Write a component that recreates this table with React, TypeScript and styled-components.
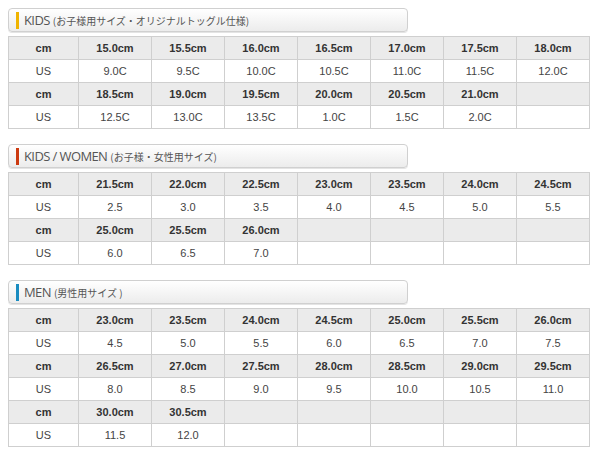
import React from 'react';
import styled, { createGlobalStyle } from 'styled-components';

const GlobalStyle = createGlobalStyle`
  body {
    margin: 8px;
    background: #ffffff;
    font-family: "Liberation Sans", Arial, sans-serif;
  }
`;

type Section = {
  title: string;
  note: string;
  color: string;
  rows: string[][];
};

const sections: Section[] = [
  {
    title: 'KIDS',
    note: '(お子様用サイズ・オリジナルトッグル仕様)',
    color: '#f0b400',
    rows: [
      ['15.0cm', '15.5cm', '16.0cm', '16.5cm', '17.0cm', '17.5cm', '18.0cm'],
      ['9.0C', '9.5C', '10.0C', '10.5C', '11.0C', '11.5C', '12.0C'],
      ['18.5cm', '19.0cm', '19.5cm', '20.0cm', '20.5cm', '21.0cm', ''],
      ['12.5C', '13.0C', '13.5C', '1.0C', '1.5C', '2.0C', ''],
    ],
  },
  {
    title: 'KIDS / WOMEN',
    note: '(お子様・女性用サイズ)',
    color: '#cc3a10',
    rows: [
      ['21.5cm', '22.0cm', '22.5cm', '23.0cm', '23.5cm', '24.0cm', '24.5cm'],
      ['2.5', '3.0', '3.5', '4.0', '4.5', '5.0', '5.5'],
      ['25.0cm', '25.5cm', '26.0cm', '', '', '', ''],
      ['6.0', '6.5', '7.0', '', '', '', ''],
    ],
  },
  {
    title: 'MEN',
    note: ' (男性用サイズ )',
    color: '#1a8cc0',
    rows: [
      ['23.0cm', '23.5cm', '24.0cm', '24.5cm', '25.0cm', '25.5cm', '26.0cm'],
      ['4.5', '5.0', '5.5', '6.0', '6.5', '7.0', '7.5'],
      ['26.5cm', '27.0cm', '27.5cm', '28.0cm', '28.5cm', '29.0cm', '29.5cm'],
      ['8.0', '8.5', '9.0', '9.5', '10.0', '10.5', '11.0'],
      ['30.0cm', '30.5cm', '', '', '', '', ''],
      ['11.5', '12.0', '', '', '', '', ''],
    ],
  },
];

const Block = styled.section`
  margin-bottom: 15px;
`;

const Heading = styled.h2`
  box-sizing: border-box;
  width: 400px;
  height: 24px;
  margin: 0 0 4px;
  padding: 0 0 0 7px;
  display: flex;
  align-items: center;
  border: 1px solid #d0d0d0;
  border-radius: 4px;
  background: linear-gradient(#ffffff, #ececec);
  box-shadow: 0 1px 0 #e4e4e4;
  font-family: "Open Sans", "Noto Sans CJK JP", sans-serif;
  font-weight: 400;
  color: #555555;
`;

const Bar = styled.span<{ $color: string }>`
  width: 3px;
  height: 17px;
  margin-right: 5px;
  background: ${(p) => p.$color};
`;

const Title = styled.span`
  font-size: 13px;
  letter-spacing: -0.6px;
`;

const Note = styled.span`
  font-family: "Noto Sans CJK JP", sans-serif;
  font-size: 10px;
  margin-left: 3px;
  color: #555555;
`;

const Table = styled.table`
  width: 581px;
  table-layout: fixed;
  border-collapse: collapse;
  font-family: "Liberation Sans", Arial, sans-serif;
  font-size: 11px;
`;

const Row = styled.tr<{ $head: boolean }>`
  height: 23px;
  background: ${(p) => (p.$head ? '#ebebeb' : '#ffffff')};
  font-weight: ${(p) => (p.$head ? 700 : 400)};
  color: ${(p) => (p.$head ? '#333333' : '#444444')};
`;

const Cell = styled.td`
  box-sizing: border-box;
  padding: 0;
  border: 1px solid #cfcfcf;
  text-align: center;
  vertical-align: middle;
`;

const SizeTable = ({ section }: { section: Section }) => (
  <Block>
    <Heading>
      <Bar $color={section.color} />
      <Title>{section.title}</Title>
      <Note>{section.note}</Note>
    </Heading>
    <Table>
      <colgroup>
        <col style={{ width: 70 }} />
        {section.rows[0].map((_, i) => (
          <col key={i} style={{ width: 73 }} />
        ))}
      </colgroup>
      <tbody>
        {section.rows.map((row, r) => (
          <Row key={r} $head={r % 2 === 0}>
            <Cell>{r % 2 === 0 ? 'cm' : 'US'}</Cell>
            {row.map((v, i) => (
              <Cell key={i}>{v}</Cell>
            ))}
          </Row>
        ))}
      </tbody>
    </Table>
  </Block>
);

export default function App() {
  return (
    <>
      <GlobalStyle />
      {sections.map((s) => (
        <SizeTable key={s.title} section={s} />
      ))}
    </>
  );
}
